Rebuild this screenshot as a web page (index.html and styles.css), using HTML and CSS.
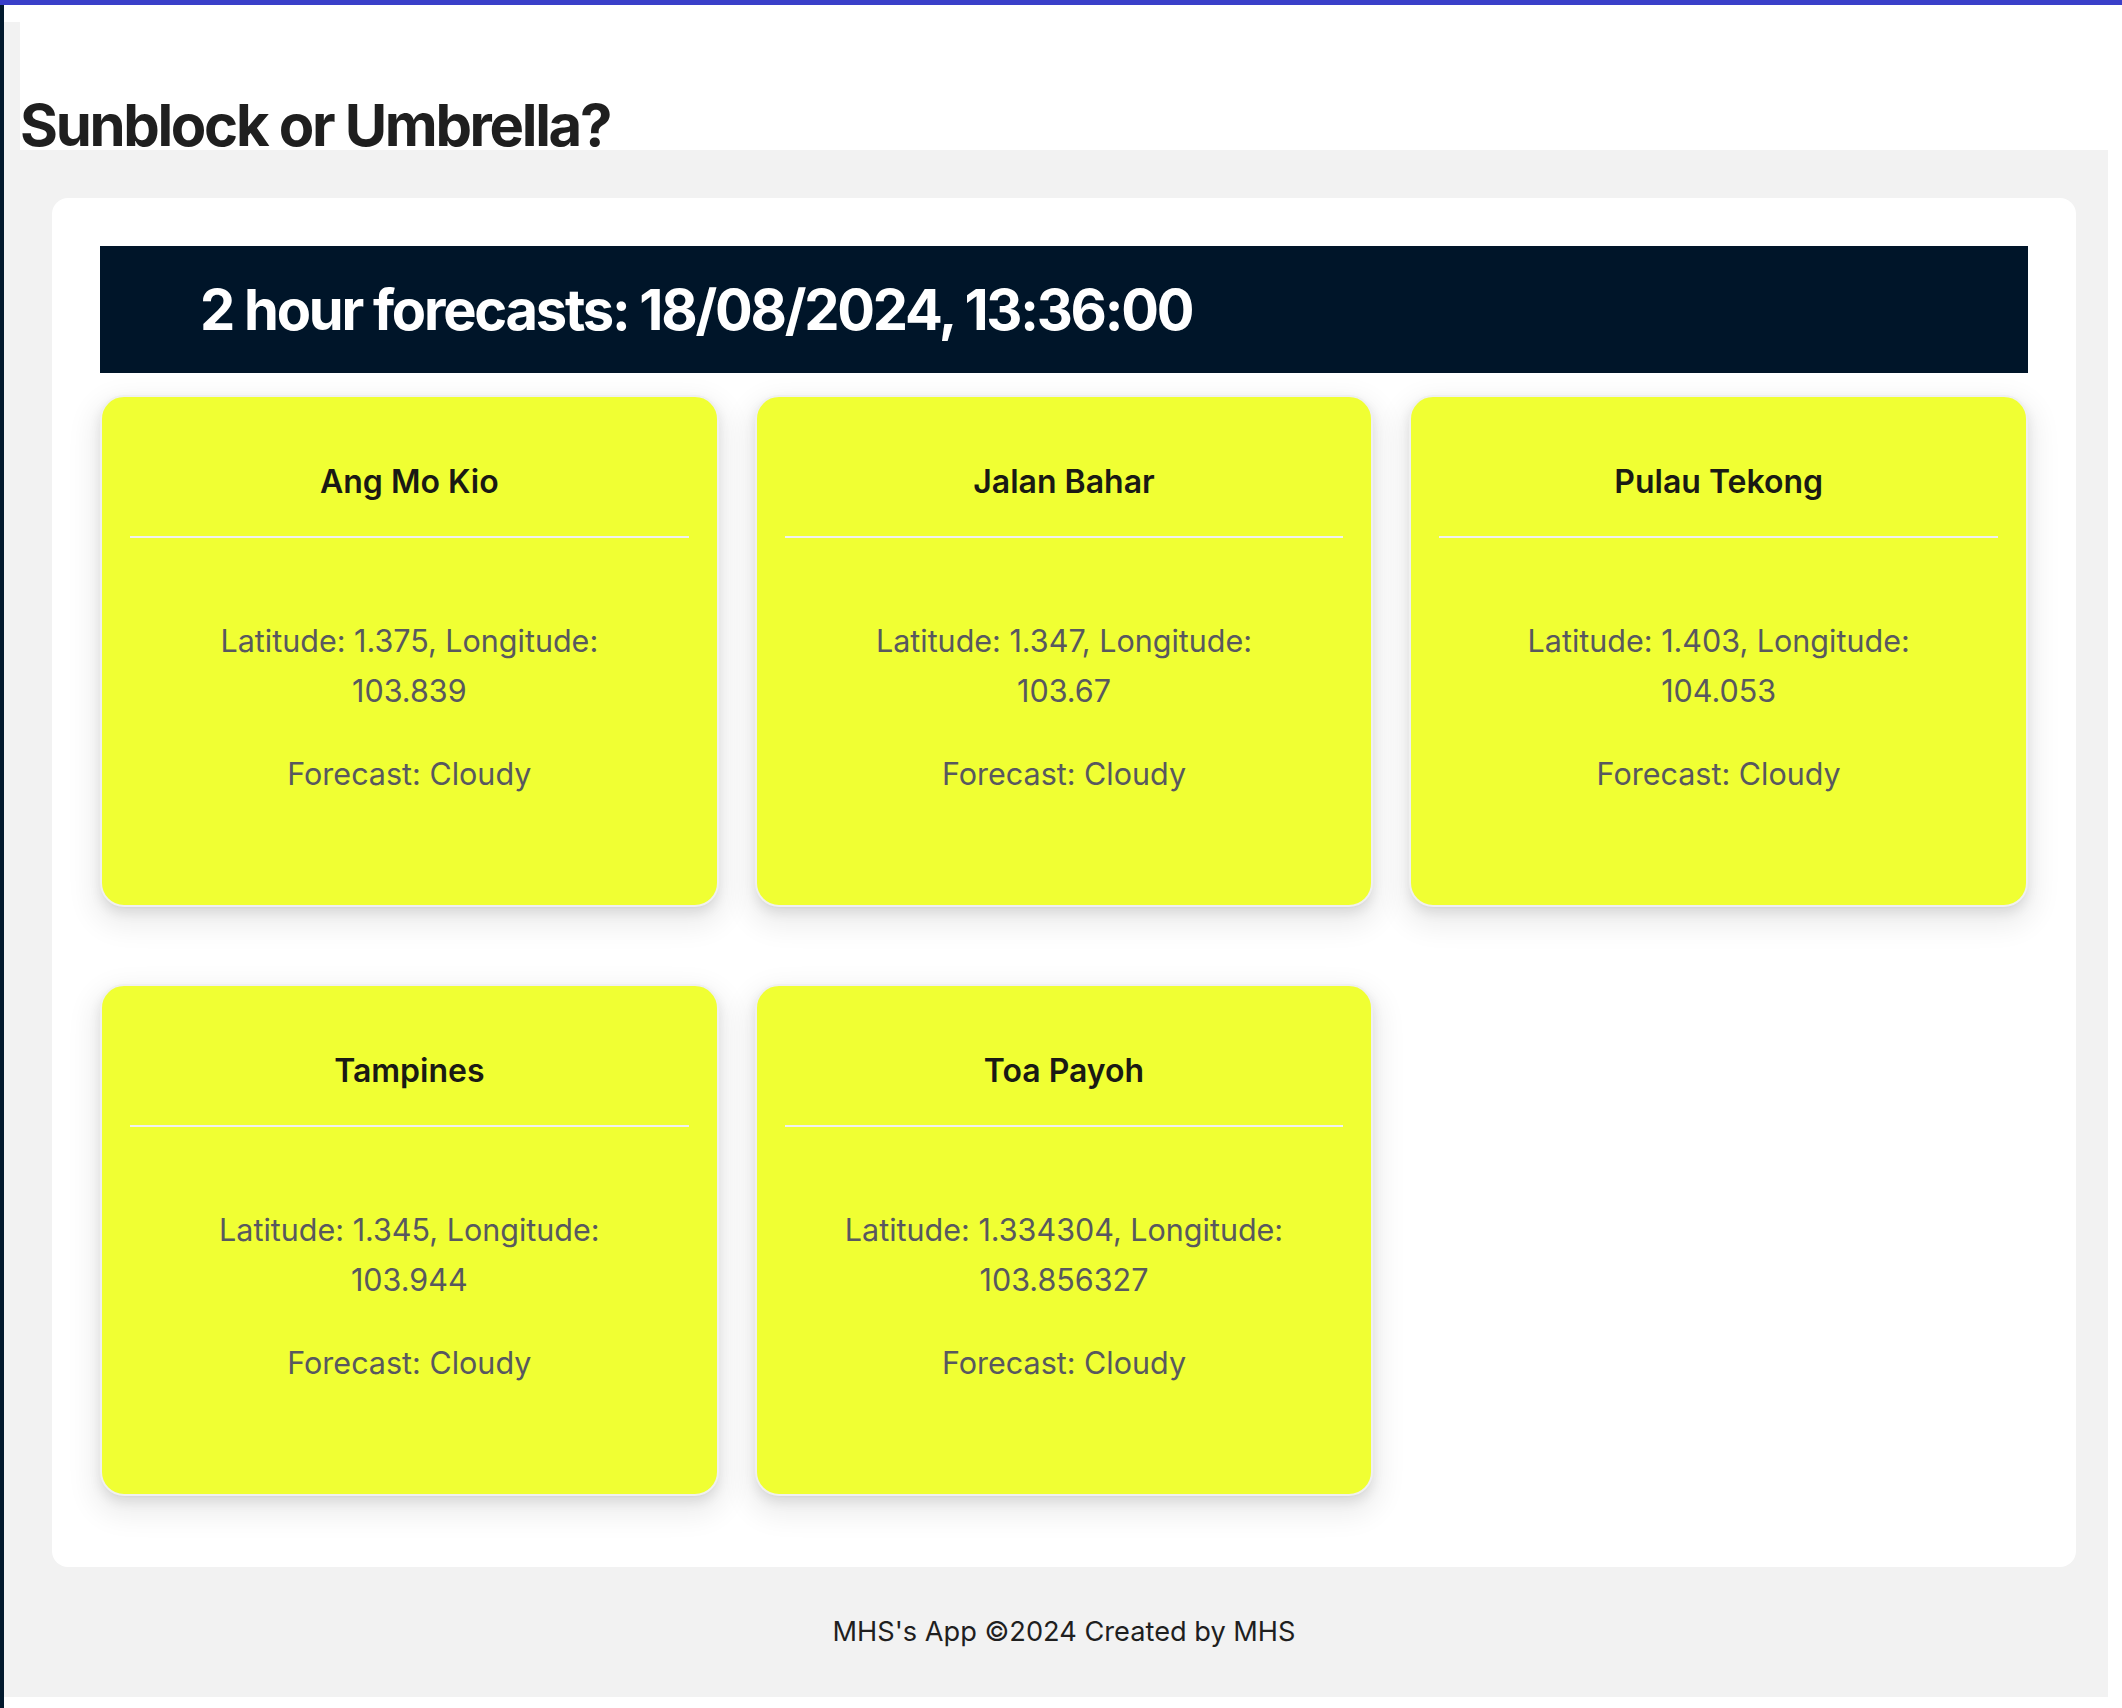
FILE: index.html
```html
<!DOCTYPE html>
<html lang="en">
<head>
<meta charset="utf-8">
<title>Sunblock or Umbrella?</title>
<link rel="stylesheet" href="styles.css">
</head>
<body>
<div class="topbar"></div>
<div class="frame">
  <div class="stripe"></div>
  <div class="page">
    <div class="layout">
      <div class="sider"></div>
      <div class="main">
        <header class="header">
          <h1 class="app-title">Sunblock or Umbrella?</h1>
        </header>
        <main class="content">
          <div class="box">
            <div class="banner">
              <h2 class="banner-title">2 hour forecasts: 18/08/2024, 13:36:00</h2>
            </div>
            <div class="cards">
              <div class="card">
                <div class="card-title">Ang Mo Kio</div>
                <div class="card-divider"></div>
                <div class="card-body">
                  <p class="card-text">Latitude: 1.375, Longitude: 103.839</p>
                  <p class="card-text">Forecast: Cloudy</p>
                </div>
              </div>
              <div class="card">
                <div class="card-title">Jalan Bahar</div>
                <div class="card-divider"></div>
                <div class="card-body">
                  <p class="card-text">Latitude: 1.347, Longitude: 103.67</p>
                  <p class="card-text">Forecast: Cloudy</p>
                </div>
              </div>
              <div class="card">
                <div class="card-title">Pulau Tekong</div>
                <div class="card-divider"></div>
                <div class="card-body">
                  <p class="card-text">Latitude: 1.403, Longitude: 104.053</p>
                  <p class="card-text">Forecast: Cloudy</p>
                </div>
              </div>
              <div class="card">
                <div class="card-title">Tampines</div>
                <div class="card-divider"></div>
                <div class="card-body">
                  <p class="card-text">Latitude: 1.345, Longitude: 103.944</p>
                  <p class="card-text">Forecast: Cloudy</p>
                </div>
              </div>
              <div class="card">
                <div class="card-title">Toa Payoh</div>
                <div class="card-divider"></div>
                <div class="card-body">
                  <p class="card-text">Latitude: 1.334304, Longitude: 103.856327</p>
                  <p class="card-text">Forecast: Cloudy</p>
                </div>
              </div>
            </div>
          </div>
        </main>
        <footer class="footer">MHS's App ©2024 Created by MHS</footer>
      </div>
    </div>
  </div>
</div>
</body>
</html>
```
FILE: styles.css
```css
* { box-sizing: border-box; }

html, body {
  margin: 0;
  padding: 0;
  background: #ffffff;
}

body {
  font-family: Inter, "Noto Sans", sans-serif;
  color: #1f1f1f;
  width: 2122px;
  height: 1708px;
  overflow: hidden;
}

.topbar {
  height: 5px;
  background: #3a3fc9;
}

.frame {
  display: flex;
  height: 1703px;
}

.stripe {
  width: 4px;
  flex: none;
  background: #021a2e;
}

.page {
  flex: 1;
  padding: 17px 14px 11px 0;
  display: flex;
}

.layout {
  flex: 1;
  display: flex;
  background: #f2f2f2;
}

.sider {
  width: 16px;
  flex: none;
  background: #f2f2f2;
}

.main {
  flex: 1;
  display: flex;
  flex-direction: column;
}

.header {
  height: 128px;
  background: #ffffff;
  padding-top: 74px;
}

.app-title {
  margin: 0;
  font-family: Inter, sans-serif;
  font-size: 58px;
  line-height: 58px;
  font-weight: 700;
  letter-spacing: -0.04em;
  color: #1f1f1f;
  white-space: nowrap;
}

.content {
  padding: 48px 32px 0 32px;
}

.box {
  background: #ffffff;
  border-radius: 16px;
  padding: 48px 48px 71px 48px;
}

.banner {
  height: 127px;
  background: #001529;
  display: flex;
  align-items: center;
  padding-left: 100px;
}

.banner-title {
  margin: 0;
  color: #ffffff;
  font-family: Inter, sans-serif;
  font-size: 56px;
  line-height: 58px;
  font-weight: 700;
  letter-spacing: -0.04em;
  white-space: nowrap;
}

.cards {
  margin-top: 22px;
  display: grid;
  grid-template-columns: repeat(3, 1fr);
  column-gap: 36px;
  row-gap: 77px;
}

.card {
  background: #f0ff33;
  border: 2px solid #f0f0f0;
  border-radius: 24px;
  padding: 0 28px;
  box-shadow: 0 2px 4px -4px rgba(0,0,0,0.16), 0 6px 12px 0 rgba(0,0,0,0.09), 0 12px 28px 8px rgba(0,0,0,0.07);
  text-align: center;
}

.card-title {
  padding-top: 66px;
  padding-bottom: 35px;
  font-size: 32px;
  line-height: 38px;
  font-weight: 600;
  color: #1a1a14;
}

.card-divider {
  height: 2px;
  background: #f0f0f0;
}

.card-body {
  padding: 78px 54px 106px 54px;
}

.card-text {
  margin: 0 0 33px 0;
  font-size: 30.5px;
  line-height: 50px;
  color: #58585f;
}

.card-text:last-child {
  margin-bottom: 0;
}

.footer {
  flex: 1;
  display: flex;
  align-items: center;
  justify-content: center;
  font-size: 27.2px;
  color: #1f1f1f;
  padding-bottom: 1px;
}
```
